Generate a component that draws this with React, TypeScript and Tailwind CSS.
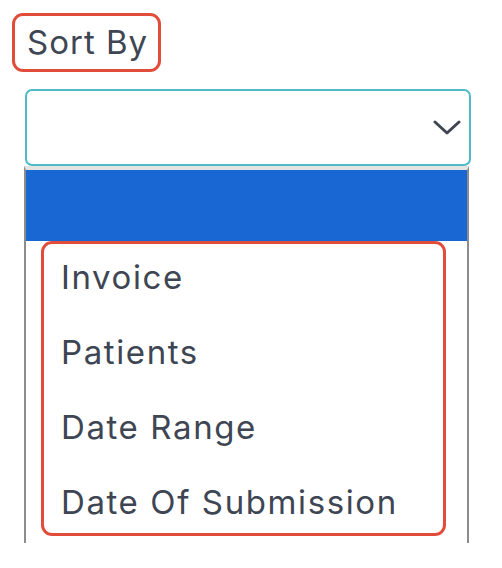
import React from 'react'

const options = ['Invoice', 'Patients', 'Date Range', 'Date Of Submission']

export default function App(){
  return (
    <div className="w-[502px] h-[568px] bg-white font-['Inter','Liberation_Sans',sans-serif] text-[#3e4553]">
      <div className="pt-[13px] pl-[12px]">
        <div className="inline-flex items-center h-[59px] pl-[12px] pr-[10px] border-[3px] border-[#e24c3b] rounded-[11px] text-[33px] tracking-[1px]">
          Sort By
        </div>
      </div>
      <div className="mt-[17px] ml-[24px] w-[447px]">
        <div className="h-[77px] ml-[1px] border-2 border-[#4fbac6] rounded-[7px] flex items-center justify-end pr-[8px]">
          <svg width="28" height="17" viewBox="0 0 28 17" fill="none" stroke="#3f4652" strokeWidth="3" strokeLinecap="round" strokeLinejoin="round">
            <polyline points="2,3 14,14 26,3" />
          </svg>
        </div>
        <div className="w-[445px] h-[377px] border-x-2 border-[#8c8c8c] border-t-[4px] border-t-[#e3e3e3]">
          <div className="h-[71px] bg-[#1967d2]" />
          <div className="ml-[15px] w-[405px] border-[3px] border-[#e24c3b] rounded-[11px] pl-[17px] pt-[4px] flex flex-col gap-[15px]">
            {options.map(o => (
              <div key={o} className="h-[60px] flex items-center text-[33px] tracking-[1.6px] whitespace-nowrap">{o}</div>
            ))}
          </div>
        </div>
      </div>
    </div>
  )
}
